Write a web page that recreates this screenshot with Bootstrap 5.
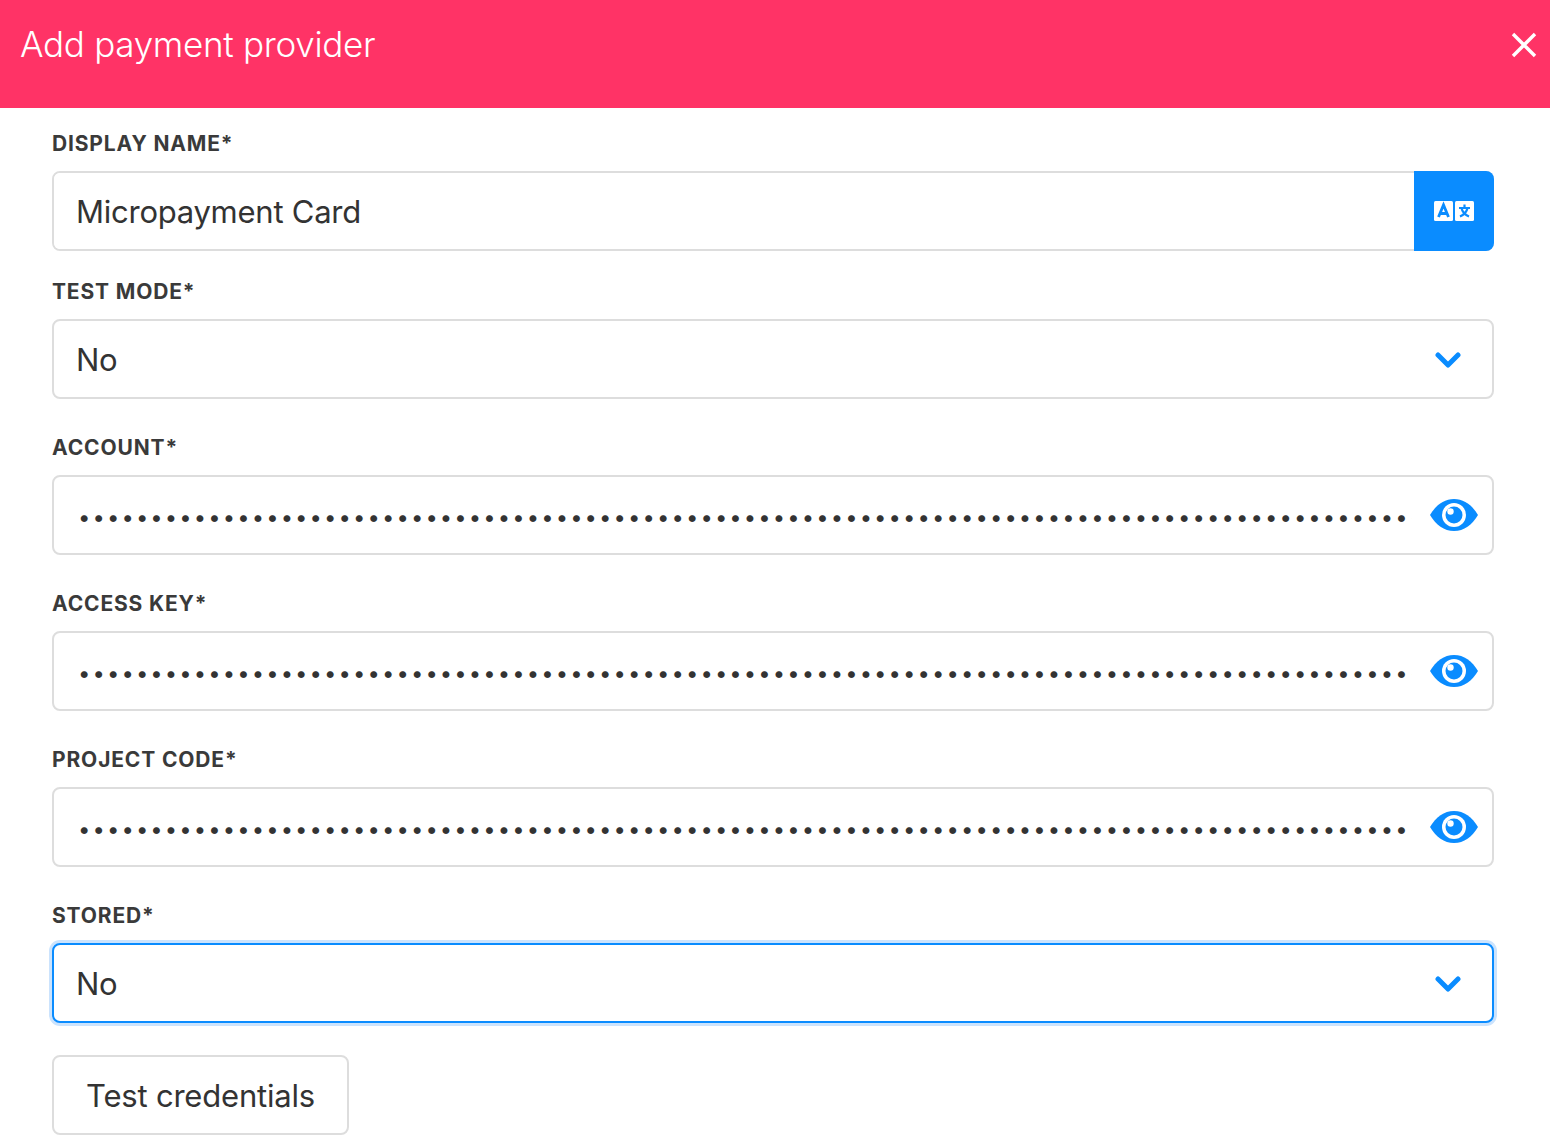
<!DOCTYPE html>
<html lang="en"><head><meta charset="utf-8"><title>Add payment provider</title>
<link href="https://cdn.jsdelivr.net/npm/bootstrap@5.3.0/dist/css/bootstrap.min.css" rel="stylesheet">
<style>
html,body{height:1146px;overflow:hidden;background:#fff}
body{font-family:Inter,"Noto Sans",sans-serif;color:#333}
.pay-head{background:#ff3366;height:108px;padding:0 12px 20px 20px;color:#fff}
.pay-title{font-size:35px;font-weight:300;letter-spacing:-.3px;line-height:1;margin:0}
.pay-close{width:28px;height:28px;background:none;border:0;padding:0;line-height:0;margin-bottom:-2px}
.pay-form{padding:0 56px 0 52px}
.pay-label{display:block;font-size:21px;font-weight:700;letter-spacing:.85px;line-height:28px;text-transform:uppercase;color:#3a3a3a;margin:0 0 13px;padding-top:1px}
.pay-field{height:80px;border:2px solid #ddd;border-radius:8px;background:#fff}
.pay-control{height:76px;border:0;border-radius:6px;padding:0 0 0 22px;font-size:31px;font-weight:400;letter-spacing:-.25px;color:#333;box-shadow:none}
.pay-control:focus{box-shadow:none;color:#333}
.pay-block{margin-top:34px}
.pay-block.first{margin-top:21px}
.pay-block.tight{margin-top:26px}
.pay-trans{width:80px;height:80px;margin:-2px;background:#0a8cff;border:0;border-radius:0 8px 8px 0;line-height:0;padding:0;flex:none}
.pay-select{height:80px;border:2px solid #ddd;border-radius:8px;padding:2px 40px 0 22px;font-size:31px;letter-spacing:-.25px;color:#333;
background-image:url("data:image/svg+xml,%3Csvg xmlns='http://www.w3.org/2000/svg' viewBox='0 0 26 18'%3E%3Cpath d='M3 3l10 10L23 3' fill='none' stroke='%230a8cff' stroke-width='5' stroke-linecap='round' stroke-linejoin='round'/%3E%3C/svg%3E");
background-size:26px 18px;background-position:right 31px top 31px}
.pay-select.pay-on,.pay-select.pay-on:focus{border-color:#0a8cff;box-shadow:0 0 0 3px #cbe3fd}
.pay-secret{font-size:22px;letter-spacing:2.1px;width:1358px;flex:none;padding:3px 0 0 24px;height:76px;background:transparent}
.pay-eye{width:48px;height:32px;flex:none;margin:0 14px 0 auto}
.pay-test{height:80px;border:2px solid #ddd;border-radius:8px;padding:2px 32px 0 32px;font-size:31px;letter-spacing:-.2px;color:#333;background:#fff;margin-top:32px}
.pay-test:hover{border-color:#ddd;color:#333}
</style></head>
<body>
<header class="pay-head d-flex align-items-center justify-content-between">
  <h1 class="pay-title">Add payment provider</h1>
  <button type="button" class="pay-close" aria-label="Close"><svg width="28" height="28" viewBox="0 0 28 28"><path d="M3 3l22 22M25 3L3 25" stroke="#fff" stroke-width="3.4" fill="none"/></svg></button>
</header>
<form class="pay-form">
  <div class="pay-block first">
    <label class="pay-label">Display name*</label>
    <div class="pay-field d-flex align-items-center">
      <input class="form-control pay-control flex-grow-1" value="Micropayment Card">
      <button type="button" class="pay-trans d-flex align-items-center justify-content-center" aria-label="Translate">
        <svg width="40" height="20" viewBox="0 0 40 20"><rect x="0" width="19" height="20" rx="1.5" fill="#fff"/><rect x="21" width="19" height="20" rx="1.5" fill="#fff"/>
        <path d="M4.500 16L9.500 4L14.500 16M6.300 12.500h6.400" stroke="#0a8cff" stroke-width="2.800" fill="none"/>
        <path d="M25 7h11M30.500 3.500v3.500M33.500 7c-.8 4-4 7-7.500 8.500M27.500 7c.8 4 4 7 7.500 8.500" stroke="#0a8cff" stroke-width="2.200" fill="none"/></svg>
      </button>
    </div>
  </div>
  <div class="pay-block tight">
    <label class="pay-label">Test mode*</label>
    <select class="form-select pay-select"><option>No</option></select>
  </div>
  <div class="pay-block">
    <label class="pay-label">Account*</label>
    <div class="pay-field d-flex align-items-center overflow-hidden">
      <input type="password" class="form-control pay-control pay-secret" value="aaaaaaaaaaaaaaaaaaaaaaaaaaaaaaaaaaaaaaaaaaaaaaaaaaaaaaaaaaaaaaaaaaaaaaaaaaaaaaaaaaaaaaaaaaaaaaaaaaaaaaaaaa">
      <svg class="pay-eye" viewBox="0 0 48 32"><path d="M0 16C6 6 14 0 24 0s18 6 24 16c-6 10-14 16-24 16S6 26 0 16z" fill="#0a8cff"/><circle cx="24" cy="16" r="12" fill="#fff"/><circle cx="24" cy="16" r="8.500" fill="#0a8cff"/><circle cx="20.500" cy="12.500" r="3.200" fill="#fff"/></svg>
    </div>
  </div>
  <div class="pay-block">
    <label class="pay-label">Access key*</label>
    <div class="pay-field d-flex align-items-center overflow-hidden">
      <input type="password" class="form-control pay-control pay-secret" value="aaaaaaaaaaaaaaaaaaaaaaaaaaaaaaaaaaaaaaaaaaaaaaaaaaaaaaaaaaaaaaaaaaaaaaaaaaaaaaaaaaaaaaaaaaaaaaaaaaaaaaaaaa">
      <svg class="pay-eye" viewBox="0 0 48 32"><path d="M0 16C6 6 14 0 24 0s18 6 24 16c-6 10-14 16-24 16S6 26 0 16z" fill="#0a8cff"/><circle cx="24" cy="16" r="12" fill="#fff"/><circle cx="24" cy="16" r="8.500" fill="#0a8cff"/><circle cx="20.500" cy="12.500" r="3.200" fill="#fff"/></svg>
    </div>
  </div>
  <div class="pay-block">
    <label class="pay-label">Project code*</label>
    <div class="pay-field d-flex align-items-center overflow-hidden">
      <input type="password" class="form-control pay-control pay-secret" value="aaaaaaaaaaaaaaaaaaaaaaaaaaaaaaaaaaaaaaaaaaaaaaaaaaaaaaaaaaaaaaaaaaaaaaaaaaaaaaaaaaaaaaaaaaaaaaaaaaaaaaaaaa">
      <svg class="pay-eye" viewBox="0 0 48 32"><path d="M0 16C6 6 14 0 24 0s18 6 24 16c-6 10-14 16-24 16S6 26 0 16z" fill="#0a8cff"/><circle cx="24" cy="16" r="12" fill="#fff"/><circle cx="24" cy="16" r="8.500" fill="#0a8cff"/><circle cx="20.500" cy="12.500" r="3.200" fill="#fff"/></svg>
    </div>
  </div>
  <div class="pay-block">
    <label class="pay-label">Stored*</label>
    <select class="form-select pay-select pay-on"><option>No</option></select>
  </div>
  <button type="button" class="btn pay-test">Test credentials</button>
</form>
<script src="https://cdn.jsdelivr.net/npm/bootstrap@5.3.0/dist/js/bootstrap.bundle.min.js"></script>
</body></html>
